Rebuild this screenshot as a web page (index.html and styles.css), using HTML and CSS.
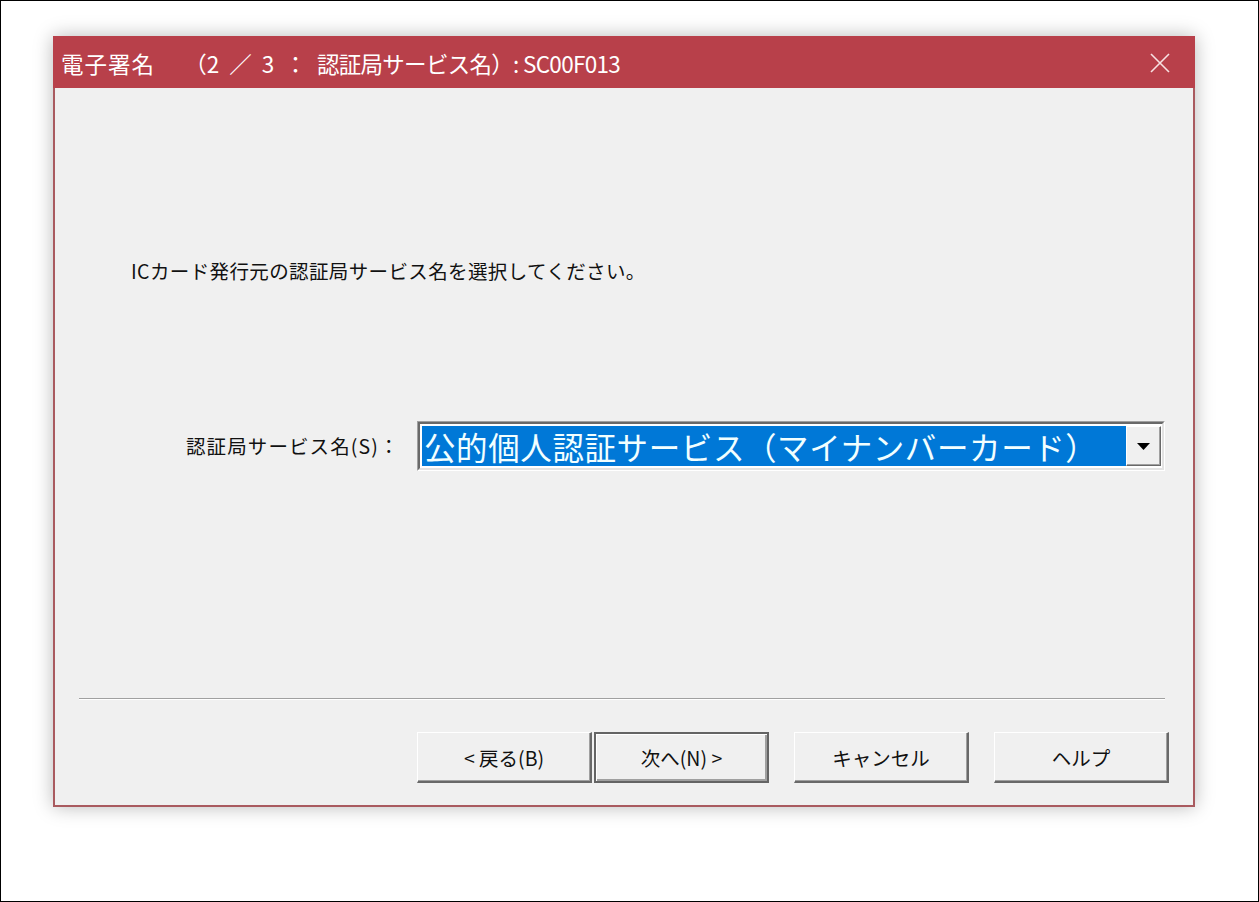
FILE: index.html
```html
<!DOCTYPE html>
<html lang="ja">
<head>
<meta charset="utf-8">
<title>電子署名</title>
<link rel="stylesheet" href="styles.css">
</head>
<body>
<div class="screen">
  <div class="dialog">
    <div class="titlebar">
      <span class="title"><span class="t1">電子署名</span><span class="t2">　（2 ／ 3 ： </span><span class="t3">認証局サービス名）: SC00F013</span></span>
      <svg class="close" width="22" height="22" viewBox="0 0 22 22"><path d="M2 2 L20 20 M20 2 L2 20" stroke="#f7e1e2" stroke-width="1.6" fill="none"/></svg>
    </div>
    <div class="client">
      <p class="instr">ICカード発行元の認証局サービス名を選択してください。</p>
      <div class="field-row">
        <label class="field-label">認証局サービス名(S)：</label>
        <div class="combo">
          <div class="combo-inner">
            <div class="combo-value"><span>公的個人認証サービス（マイナンバーカード）</span></div>
            <div class="combo-btn"><svg width="13" height="7" viewBox="0 0 13 7"><path d="M0 0 H13 L6.5 7 Z" fill="#000"/></svg></div>
          </div>
        </div>
      </div>
      <div class="separator"></div>
      <div class="buttons">
        <button class="btn">&lt; 戻る(B)</button>
        <button class="btn btn-default">次へ(N) &gt;</button>
        <button class="btn btn-gap">キャンセル</button>
        <button class="btn btn-gap">ヘルプ</button>
      </div>
    </div>
  </div>
</div>
</body>
</html>
```
FILE: styles.css
```css
* { box-sizing: border-box; }
html, body { margin: 0; padding: 0; background: #fff; }
body { font-family: "Noto Sans CJK JP", "Noto Sans", sans-serif; }

.screen {
  width: 1259px;
  height: 902px;
  border: 1px solid #000;
  padding: 35px 0 0 52px;
  background: #fff;
}

.dialog {
  width: 1142px;
  height: 771px;
  border: 2px solid #a95a5f;
  border-top-color: #b8404a;
  background: #f0f0f0;
  box-shadow: 0 0 18px rgba(0,0,0,0.28);
  display: flex;
  flex-direction: column;
}

.titlebar {
  margin: -2px -2px 0 -2px;
  padding: 0 24px 0 8px;
  height: 52px;
  background: #b8404a;
  display: flex;
  align-items: center;
  justify-content: space-between;
}
.title {
  color: #fff;
  font-size: 22.5px;
  line-height: 26px;
  padding-top: 1px;
  white-space: pre;
}
.t1 { letter-spacing: 1px; }
.t2 { margin-left: 18px; word-spacing: 5px; }
.t3 { letter-spacing: -0.7px; }
.close { display: block; margin-top: 2px; }

.client {
  flex: 1;
  display: flex;
  flex-direction: column;
}

.instr {
  margin: 171px 0 0 76px;
  font-size: 19.5px;
  line-height: 24px;
  letter-spacing: 0.38px;
  color: #111;
}

.field-row {
  margin: 138px 0 0 131px;
  display: flex;
  align-items: center;
  height: 50px;
}
.field-label {
  width: 231px;
  font-size: 19.5px;
  line-height: 24px;
  letter-spacing: 1.1px;
  color: #111;
}
.combo {
  width: 748px;
  height: 50px;
  border: 1px solid;
  border-color: #a0a0a0 #fff #fff #a0a0a0;
}
.combo-inner {
  height: 100%;
  border: 2px solid;
  border-color: #696969 #e3e3e3 #e3e3e3 #696969;
  background: #fff;
  padding: 2px 1px 2px 2px;
  display: flex;
}
.combo-value {
  flex: 1;
  background: #0078d7;
  display: flex;
  align-items: center;
  padding-left: 2px;
}
.combo-value span {
  color: #f2ffff;
  font-size: 31.5px;
  line-height: 38px;
  letter-spacing: 0.6px;
  white-space: nowrap;
}
.combo-btn {
  width: 35px;
  background: #f0f0f0;
  border: 1px solid;
  border-color: #fff #696969 #696969 #fff;
  box-shadow: inset -1px -1px #a0a0a0;
  display: flex;
  align-items: center;
  justify-content: center;
}
.combo-btn svg { display: block; }

.separator {
  margin: 227px 28px 0 24px;
  height: 2px;
  border-top: 1px solid #a0a0a0;
  border-bottom: 1px solid #fff;
}

.buttons {
  margin-top: 32px;
  padding-right: 24px;
  display: flex;
  justify-content: flex-end;
  gap: 2px;
}
.btn {
  width: 175px;
  height: 51px;
  background: #f0f0f0;
  border: solid;
  border-width: 1px 2px 2px 1px;
  border-color: #fff #696969 #696969 #fff;
  box-shadow: inset -1px -1px #a0a0a0;
  font-family: "Noto Sans CJK JP", "Noto Sans", sans-serif;
  font-size: 19.5px;
  color: #111;
  padding: 0;
}
.btn-default {
  border: 2px solid #646464;
  box-shadow: inset 1px 1px #fff, inset -2px -2px #a0a0a0;
}
.btn-gap { margin-left: 23px; }
```
